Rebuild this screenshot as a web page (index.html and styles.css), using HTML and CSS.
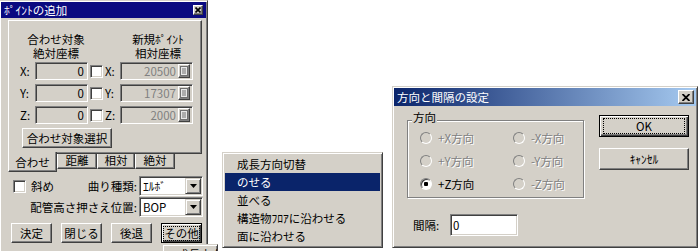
FILE: index.html
```html
<!DOCTYPE html>
<html lang="ja">
<head>
  <meta charset="UTF-8" />
  <meta name="viewport" content="width=device-width, initial-scale=1" />
  <title>ポイントの追加</title>
  <link rel="stylesheet" href="styles.css">
</head>
<body>
  <!-- ポイントの追加 -->
  <div class="win win-point">
    <div class="title title-plain">
      <span>ﾎﾟｲﾝﾄの追加</span>
      <span class="close close-small"><svg width="6" height="6" viewBox="0 0 6 6"><path d="M0.5 0.5L5.5 5.5M5.5 0.5L0.5 5.5" stroke="#000" stroke-width="1.6"/></svg></span>
    </div>

    <div class="tabs">
      <div class="tab-page">
        <div class="heads">
          <div>合わせ対象<br>絶対座標</div>
          <div class="head-new">新規ﾎﾟｲﾝﾄ<br>相対座標</div>
        </div>

        <div class="coords">
          <span>X:</span>
          <span class="field field-off">0</span>
          <span class="check"></span>
          <span>X:</span>
          <span class="field field-off field-rel"><span class="val">20500</span><span class="pick"><svg width="8" height="10" viewBox="0 0 8 10"><rect x="0.5" y="0.5" width="7" height="9" fill="#e8e8e8" stroke="#707070"/><path d="M2 3h4M2 5h4M2 7h4" stroke="#707070"/></svg></span></span>

          <span>Y:</span>
          <span class="field field-off">0</span>
          <span class="check"></span>
          <span>Y:</span>
          <span class="field field-off field-rel"><span class="val">17307</span><span class="pick"><svg width="8" height="10" viewBox="0 0 8 10"><rect x="0.5" y="0.5" width="7" height="9" fill="#e8e8e8" stroke="#707070"/><path d="M2 3h4M2 5h4M2 7h4" stroke="#707070"/></svg></span></span>

          <span>Z:</span>
          <span class="field field-off">0</span>
          <span class="check"></span>
          <span>Z:</span>
          <span class="field field-off field-rel"><span class="val">2000</span><span class="pick"><svg width="8" height="10" viewBox="0 0 8 10"><rect x="0.5" y="0.5" width="7" height="9" fill="#e8e8e8" stroke="#707070"/><path d="M2 3h4M2 5h4M2 7h4" stroke="#707070"/></svg></span></span>
        </div>

        <button class="btn btn-select">合わせ対象選択</button>
      </div>

      <div class="tab-row">
        <span class="tab tab-on">合わせ</span>
        <span class="tab tab-w40">距離</span>
        <span class="tab tab-w38">相対</span>
        <span class="tab tab-w40">絶対</span>
      </div>
    </div>

    <div class="opts">
      <div class="opt-label opt-first">
        <span class="check"></span>
        <span class="check-text">斜め</span>
        <span class="push">曲り種類:</span>
      </div>
      <div class="combo"><span class="combo-text">ｴﾙﾎﾞ</span><span class="drop"><svg width="7" height="4" viewBox="0 0 7 4"><path d="M0 0h7L3.5 4z" fill="#000"/></svg></span></div>

      <div class="opt-label">配管高さ押さえ位置:</div>
      <div class="combo"><span class="combo-text">BOP</span><span class="drop"><svg width="7" height="4" viewBox="0 0 7 4"><path d="M0 0h7L3.5 4z" fill="#000"/></svg></span></div>
    </div>

    <div class="actions">
      <button class="btn btn-small">決定</button>
      <button class="btn btn-small">閉じる</button>
      <button class="btn btn-small">後退</button>
      <button class="btn btn-small btn-default"><span class="focus">その他</span></button>
    </div>
  </div>

  <!-- その他ボタンのメニュー（下端で切れている） -->
  <div class="menu menu-peek">
    <div class="menu-item">成長方向切替</div>
  </div>

  <!-- ポップアップメニュー -->
  <div class="menu menu-main">
    <div class="menu-item">成長方向切替</div>
    <div class="menu-item menu-on">のせる</div>
    <div class="menu-item">並べる</div>
    <div class="menu-item">構造物ﾌﾛｱに沿わせる</div>
    <div class="menu-item">面に沿わせる</div>
  </div>

  <!-- 方向と間隔の設定 -->
  <div class="win win-dir">
    <div class="title title-grad">
      <span>方向と間隔の設定</span>
      <span class="close close-big"><svg width="8" height="7" viewBox="0 0 8 7"><path d="M0.5 0L7.5 7M7.5 0L0.5 7" stroke="#000" stroke-width="1.8"/></svg></span>
    </div>

    <div class="dir-body">
      <div class="dir-left">
        <fieldset class="group">
          <legend>方向</legend>
          <div class="radios">
            <label class="radio-row off"><span class="radio"></span>+X方向</label>
            <label class="radio-row off"><span class="radio"></span>-X方向</label>
            <label class="radio-row off"><span class="radio"></span>+Y方向</label>
            <label class="radio-row off"><span class="radio"></span>-Y方向</label>
            <label class="radio-row"><span class="radio radio-on"></span>+Z方向</label>
            <label class="radio-row off"><span class="radio"></span>-Z方向</label>
          </div>
        </fieldset>

        <div class="gap-row">
          <span class="gap-label">間隔:</span>
          <span class="field field-white">0</span>
        </div>
      </div>

      <div class="dir-right">
        <button class="btn btn-wide btn-default"><span class="focus">OK</span></button>
        <button class="btn btn-wide btn-cancel">ｷｬﾝｾﾙ</button>
      </div>
    </div>
  </div>
</body>
</html>
```

FILE: styles.css
```css
body {
  margin: 0;
  width: 700px;
  height: 251px;
  overflow: hidden;
  position: relative;
  background: #fff;
  font-family: "Noto Sans CJK JP", sans-serif;
  font-size: 11.5px;
  color: #000;
}

/* windows on the desktop */
.win {
  position: absolute;
  box-sizing: border-box;
  background: #d4d0c8;
  border: 1px solid;
  border-color: #d4d0c8 #404040 #404040 #d4d0c8;
  box-shadow: inset 1px 1px #fff, inset -1px -1px #808080;
  padding: 1px;
}

.win-point {
  left: -1px;
  top: 0;
  width: 209px;
  height: 270px;
}

.win-dir {
  left: 392px;
  top: 86px;
  width: 306px;
  height: 162px;
}

.title {
  display: flex;
  align-items: center;
  justify-content: space-between;
  color: #fff;
  padding-left: 3px;
  white-space: nowrap;
}

.title-plain {
  height: 16px;
  background: #0a0a80;
  padding-right: 3px;
}

.title-grad {
  height: 18px;
  background: linear-gradient(to right, #0a246a, #a6caf0);
  padding-right: 2px;
}

.close {
  display: flex;
  align-items: center;
  justify-content: center;
  box-sizing: border-box;
  background: #d4d0c8;
  border: 1px solid;
  border-color: #fff #404040 #404040 #fff;
  box-shadow: inset -1px -1px #808080;
}

.close-small { width: 10px; height: 10px; }
.close-big { width: 16px; height: 14px; }

/* shared 3d pieces */
.field {
  box-sizing: border-box;
  border: 1px solid;
  border-color: #808080 #fff #fff #808080;
  box-shadow: inset 1px 1px #404040, inset -1px -1px #d4d0c8;
  padding: 1px;
}

.check {
  display: inline-block;
  box-sizing: border-box;
  width: 13px;
  height: 13px;
  background: #fff;
  border: 1px solid;
  border-color: #808080 #fff #fff #808080;
  box-shadow: inset 1px 1px #404040, inset -1px -1px #d4d0c8;
}

.btn {
  font: inherit;
  color: #000;
  background: #d4d0c8;
  box-sizing: border-box;
  border: 1px solid;
  border-color: #fff #404040 #404040 #fff;
  box-shadow: inset -1px -1px #808080;
  padding: 0;
  height: 20px;
  white-space: nowrap;
}

.btn-default {
  border: 1px solid #000;
  box-shadow: inset 1px 1px #fff, inset -1px -1px #404040, inset -2px -2px #808080;
  display: flex;
  align-items: center;
  justify-content: center;
}

.focus {
  outline: 1px dotted #000;
  outline-offset: 0;
  display: flex;
  align-items: center;
  justify-content: center;
  white-space: nowrap;
}

/* tab control */
.tabs {
  margin: 2px 4px 0 7px;
}

.tab-page {
  box-sizing: border-box;
  width: 194px;
  height: 134px;
  border: 1px solid;
  border-color: #fff #404040 #404040 #fff;
  box-shadow: inset -1px -1px #808080;
  padding: 11px 0 0 11px;
}

.heads {
  display: grid;
  grid-template-columns: 94px 98px;
  line-height: 14px;
  text-align: center;
  margin-left: -11px;
}

.head-new {
  padding-left: 12px;
}

.coords {
  display: grid;
  grid-template-columns: 15px 53px 17px 15px 73px;
  grid-auto-rows: 18px;
  row-gap: 4px;
  align-items: center;
  margin-top: 2px;
}

.coords .check {
  justify-self: center;
}

.field-off {
  height: 18px;
  background: #d4d0c8;
  text-align: right;
  line-height: 14px;
  padding-right: 3px;
}

.field-rel {
  display: flex;
  align-items: center;
  padding-right: 2px;
  color: #808080;
}

.field-rel .val {
  flex: 1;
  padding-right: 2px;
}

.pick {
  display: flex;
  align-items: center;
  justify-content: center;
  box-sizing: border-box;
  width: 12px;
  height: 14px;
  border: 1px solid;
  border-color: #fff #404040 #404040 #fff;
  box-shadow: inset -1px -1px #808080;
}

.btn-select {
  display: block;
  width: 90px;
  margin: 4px 0 0 2px;
}

.tab-row {
  display: flex;
  align-items: flex-start;
}

.tab {
  box-sizing: border-box;
  height: 15px;
  line-height: 13px;
  text-align: center;
  border: 1px solid;
  border-color: transparent #404040 #404040 #fff;
  border-top: 0;
  box-shadow: inset -1px -1px #808080;
}

.tab-on {
  position: relative;
  width: 49px;
  height: 20px;
  margin-top: -2px;
  line-height: 21px;
  background: #d4d0c8;
}

.tab-w40 { width: 40px; }
.tab-w38 { width: 38px; }

/* options under the tabs */
.opts {
  display: grid;
  grid-template-columns: 124px 64px;
  grid-auto-rows: 20px;
  column-gap: 2px;
  row-gap: 1px;
  margin: 4px 0 0 12px;
  align-items: center;
}

.opt-label {
  text-align: right;
}

.opt-first {
  display: flex;
  align-items: center;
}

.check-text {
  margin-left: 5px;
}

.push {
  margin-left: auto;
}

.combo {
  display: flex;
  box-sizing: border-box;
  height: 20px;
  background: #fff;
  border: 1px solid;
  border-color: #808080 #fff #fff #808080;
  box-shadow: inset 1px 1px #404040, inset -1px -1px #d4d0c8;
  padding: 1px;
}

.combo-text {
  flex: 1;
  padding-left: 2px;
  line-height: 16px;
}

.drop {
  display: flex;
  align-items: center;
  justify-content: center;
  box-sizing: border-box;
  width: 16px;
  height: 16px;
  background: #d4d0c8;
  border: 1px solid;
  border-color: #d4d0c8 #404040 #404040 #d4d0c8;
  box-shadow: inset 1px 1px #fff, inset -1px -1px #808080;
}

.actions {
  display: flex;
  gap: 9px;
  margin: 6px 0 0 10px;
}

.btn-small {
  width: 41px;
}

.btn-small .focus {
  width: 35px;
  height: 13px;
}

/* popup menu */
.menu {
  position: absolute;
  box-sizing: border-box;
  width: 161px;
  background: #d4d0c8;
  border: 1px solid;
  border-color: #d4d0c8 #404040 #404040 #d4d0c8;
  box-shadow: inset 1px 1px #fff, inset -1px -1px #808080;
  padding: 2px;
}

.menu-main {
  left: 222px;
  top: 152px;
  height: 96px;
}

.menu-peek {
  left: 162px;
  top: 244px;
  width: 56px;
  height: 30px;
  padding-top: 0;
  overflow: hidden;
  white-space: nowrap;
}

.menu-item {
  height: 18px;
  line-height: 18px;
  padding-left: 12px;
}

.menu-on {
  background: #0a246a;
  color: #fff;
}

/* 方向と間隔の設定 */
.dir-body {
  display: flex;
}

.dir-left {
  margin-left: 13px;
}

.group {
  box-sizing: border-box;
  width: 176px;
  margin: 5px 0 0 0;
  padding: 0 0 2px 4px;
  border: 1px solid #808080;
  box-shadow: inset 1px 1px #fff, 1px 1px #fff;
}

.group legend {
  position: relative;
  padding: 0 1px 5px;
  line-height: 13px;
  background: #d4d0c8;
}

.radios {
  display: grid;
  grid-template-columns: 93px 70px;
  grid-auto-rows: 23px;
  margin: -3px 0 0 8px;
  align-items: center;
}

.radio-row {
  display: flex;
  align-items: center;
  gap: 6px;
}

.radio-row.off {
  color: #808080;
  text-shadow: 1px 1px #fff;
}

.radio {
  box-sizing: border-box;
  width: 12px;
  height: 12px;
  border-radius: 50%;
  background: #d4d0c8;
  border: 1px solid;
  border-color: #808080 #fff #fff #808080;
  box-shadow: inset 1px 1px #404040;
}

.radio-row.off .radio {
  box-shadow: none;
}

.radio-on {
  background: radial-gradient(circle, #000 0 2px, #fff 2.5px);
}

.gap-row {
  display: flex;
  align-items: center;
  margin: 16px 0 0 6px;
}

.gap-label {
  width: 37px;
}

.field-white {
  width: 68px;
  height: 22px;
  background: #fff;
  line-height: 18px;
  padding-left: 2px;
}

.dir-right {
  display: flex;
  flex-direction: column;
  gap: 11px;
  margin-left: 15px;
  padding-top: 9px;
}

.btn-wide {
  width: 90px;
  height: 22px;
}

.btn-wide .focus {
  width: 80px;
  height: 14px;
}
```
